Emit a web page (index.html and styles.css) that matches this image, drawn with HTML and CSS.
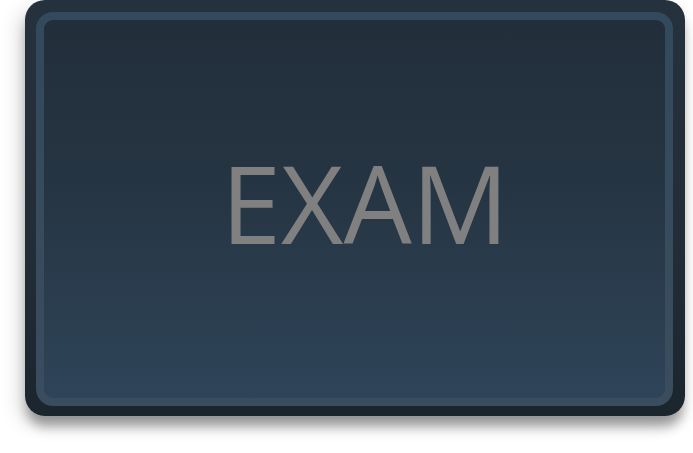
FILE: index.html
```html
<!DOCTYPE html>
<html>
<head>
<meta charset="utf-8">
<link rel="stylesheet" href="styles.css">
</head>
<body>
<div class="card">
  <div class="panel">
    <span class="label">EXAM</span>
  </div>
</div>
</body>
</html>
```
FILE: styles.css
```css
html, body {
  margin: 0;
  padding: 0;
  background: #ffffff;
}
body {
  padding: 0 8px 0 25px;
  width: 693px;
  height: 453px;
  box-sizing: border-box;
  overflow: hidden;
}
.card {
  width: 660px;
  height: 416px;
  box-sizing: border-box;
  border-radius: 20px;
  padding: 12px 12px 10px 11px;
  background: linear-gradient(to bottom, #25313c 0%, #222d38 60%, #1b252e 100%);
  box-shadow: 0 12px 12px -2px rgba(0, 0, 0, 0.35), -6px 8px 20px rgba(0, 0, 0, 0.14);
}
.panel {
  height: 100%;
  box-sizing: border-box;
  border-radius: 17px;
  border: 8px solid transparent;
  background:
    linear-gradient(to bottom, #222e3a 0%, #263543 45%, #2e4459 100%) padding-box,
    linear-gradient(to bottom, #33495c 0%, #3a4d5e 100%) border-box;
  display: flex;
  align-items: center;
  justify-content: center;
  padding-left: 21px;
}
.label {
  font-family: "Open Sans", sans-serif;
  font-size: 108px;
  line-height: 1;
  color: #808080;
  margin-top: -12px;
}
```
